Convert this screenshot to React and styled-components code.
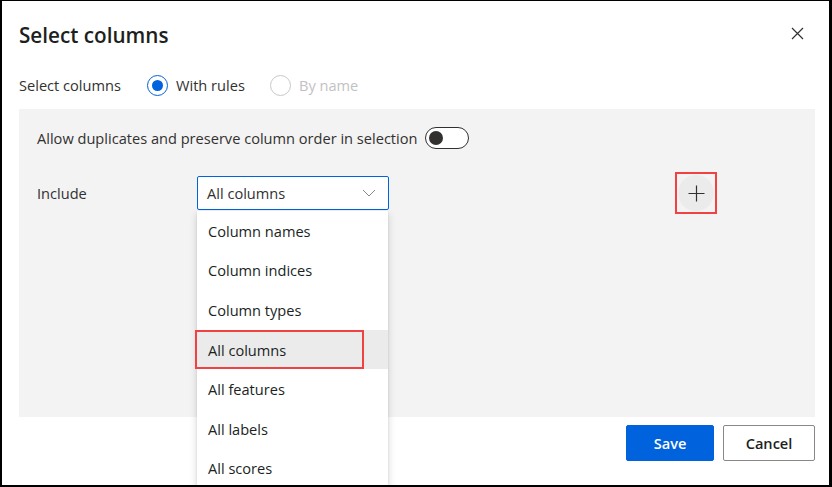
import styled, { createGlobalStyle } from 'styled-components';

const GlobalStyle = createGlobalStyle`
  body {
    margin: 0;
    background: #ffffff;
    font-family: "Open Sans", "Noto Sans", sans-serif;
    color: #323130;
  }
`;

const options = [
  'Column names',
  'Column indices',
  'Column types',
  'All columns',
  'All features',
  'All labels',
  'All scores',
];

export default function App() {
  return (
    <>
      <GlobalStyle />
      <Frame>
        <Header>
          <Title>Select columns</Title>
          <CloseButton aria-label="Close">
            <svg width="13" height="13" viewBox="0 0 13 13">
              <path d="M1 1 L12 12 M12 1 L1 12" stroke="#323130" strokeWidth="1.2" fill="none" />
            </svg>
          </CloseButton>
        </Header>

        <RadioRow>
          <FieldLabel>Select columns</FieldLabel>
          <RadioOption>
            <RadioCircle checked />
            <span>With rules</span>
          </RadioOption>
          <RadioOption disabled>
            <RadioCircle disabled />
            <span>By name</span>
          </RadioOption>
        </RadioRow>

        <Panel>
          <ToggleRow>
            <span>Allow duplicates and preserve column order in selection</span>
            <Toggle>
              <Knob />
            </Toggle>
          </ToggleRow>

          <IncludeRow>
            <IncludeLabel>Include</IncludeLabel>
            <DropdownWrap>
              <Dropdown>
                <span>All columns</span>
                <svg width="14" height="8" viewBox="0 0 14 8">
                  <path d="M1 1 L7 7 L13 1" stroke="#8a8886" strokeWidth="1" fill="none" />
                </svg>
              </Dropdown>
              <Menu>
                {options.map((opt) => (
                  <MenuItem key={opt} selected={opt === 'All columns'}>
                    {opt}
                    {opt === 'All columns' && <MenuMark />}
                  </MenuItem>
                ))}
              </Menu>
            </DropdownWrap>
            <Highlight>
              <AddButton aria-label="Add rule">
                <svg width="17" height="17" viewBox="0 0 17 17">
                  <path d="M8.5 0.5 V16.5 M0.5 8.5 H16.5" stroke="#323130" strokeWidth="1.2" fill="none" />
                </svg>
              </AddButton>
            </Highlight>
          </IncludeRow>
        </Panel>

        <Footer>
          <PrimaryButton>Save</PrimaryButton>
          <DefaultButton>Cancel</DefaultButton>
        </Footer>
      </Frame>
    </>
  );
}

const Frame = styled.div`
  width: 832px;
  height: 487px;
  box-sizing: border-box;
  border: 2px solid #000;
  border-top-width: 1px;
  border-right-width: 3px;
  overflow: hidden;
  padding: 0 14px 0 17px;
  display: flex;
  flex-direction: column;
  font-size: 14.6px;
`;

const Header = styled.div`
  display: flex;
  justify-content: space-between;
  align-items: center;
  height: 28px;
  margin-top: 20px;
`;

const Title = styled.h1`
  margin: 0;
  font-size: 20.7px;
  font-weight: 600;
  line-height: 28px;
  color: #201f1e;
`;

const CloseButton = styled.button`
  border: none;
  background: none;
  padding: 0;
  width: 13px;
  height: 13px;
  display: flex;
  margin-right: 11px;
  margin-top: -3px;
`;

const RadioRow = styled.div`
  display: flex;
  align-items: center;
  height: 24px;
  margin-top: 24px;
`;

const FieldLabel = styled.span`
  width: 128px;
`;

const RadioOption = styled.label`
  display: flex;
  align-items: center;
  gap: 8px;
  margin-right: 8px;
  width: ${(p) => (p.disabled ? 'auto' : '115px')};
  color: ${(p) => (p.disabled ? '#c2c2c2' : '#323130')};
`;

const RadioCircle = styled.span`
  width: 21px;
  height: 21px;
  box-sizing: border-box;
  border-radius: 50%;
  border: 1px solid ${(p) => (p.checked ? '#0062dc' : '#c8c8c8')};
  display: flex;
  align-items: center;
  justify-content: center;
  &::after {
    content: '';
    display: ${(p) => (p.checked ? 'block' : 'none')};
    width: 11px;
    height: 11px;
    border-radius: 50%;
    background: #0062dc;
  }
`;

const Panel = styled.div`
  margin-top: 12px;
  height: 308px;
  background: #f3f3f3;
  padding: 18px 18px 0;
  box-sizing: border-box;
  display: flex;
  flex-direction: column;
`;

const ToggleRow = styled.div`
  display: flex;
  align-items: center;
  gap: 7px;
  height: 22px;
`;

const Toggle = styled.span`
  width: 44px;
  height: 22px;
  box-sizing: border-box;
  border: 1px solid #323130;
  border-radius: 11px;
  background: #fff;
  display: flex;
  align-items: center;
  padding-left: 3px;
`;

const Knob = styled.span`
  width: 14px;
  height: 14px;
  border-radius: 50%;
  background: #323130;
`;

const IncludeRow = styled.div`
  display: flex;
  align-items: center;
  margin-top: 23px;
`;

const IncludeLabel = styled.span`
  width: 160px;
`;

const DropdownWrap = styled.div`
  position: relative;
  width: 192px;
`;

const Dropdown = styled.div`
  height: 34px;
  box-sizing: border-box;
  border: 1px solid #0062dc;
  border-radius: 2px;
  background: #fff;
  display: flex;
  align-items: center;
  justify-content: space-between;
  padding: 0 12px 0 9px;
  color: #323130;
`;

const Menu = styled.div`
  position: absolute;
  top: 35px;
  left: 0;
  width: 191px;
  background: #fff;
  box-shadow: 0 3px 8px rgba(0, 0, 0, 0.16), 0 1px 2px rgba(0, 0, 0, 0.1);
  z-index: 2;
`;

const MenuItem = styled.div`
  position: relative;
  height: 39.6px;
  display: flex;
  align-items: center;
  padding-left: 11px;
  background: ${(p) => (p.selected ? '#ebebeb' : '#fff')};
  color: #201f1e;
`;

const MenuMark = styled.span`
  position: absolute;
  left: -2px;
  top: 0;
  width: 169px;
  height: 100%;
  box-sizing: border-box;
  border: 2px solid #f04242;
`;

const Highlight = styled.span`
  margin-left: 286px;
  border: 2px solid #f04242;
  padding: 1px;
  display: flex;
`;

const AddButton = styled.button`
  width: 36px;
  height: 36px;
  border-radius: 50%;
  border: none;
  background: #ebebeb;
  display: flex;
  align-items: center;
  justify-content: center;
  padding: 0;
`;

const Footer = styled.div`
  display: flex;
  justify-content: flex-end;
  gap: 9px;
  margin-top: 8px;
`;

const BaseButton = styled.button`
  height: 36px;
  box-sizing: border-box;
  border-radius: 2px;
  font-family: inherit;
  font-size: 14.6px;
  font-weight: 600;
  padding: 0;
`;

const PrimaryButton = styled(BaseButton)`
  width: 88px;
  background: #0062dc;
  border: 1px solid #0062dc;
  color: #fff;
`;

const DefaultButton = styled(BaseButton)`
  width: 92px;
  background: #fff;
  border: 1px solid #8a8886;
  color: #201f1e;
`;
